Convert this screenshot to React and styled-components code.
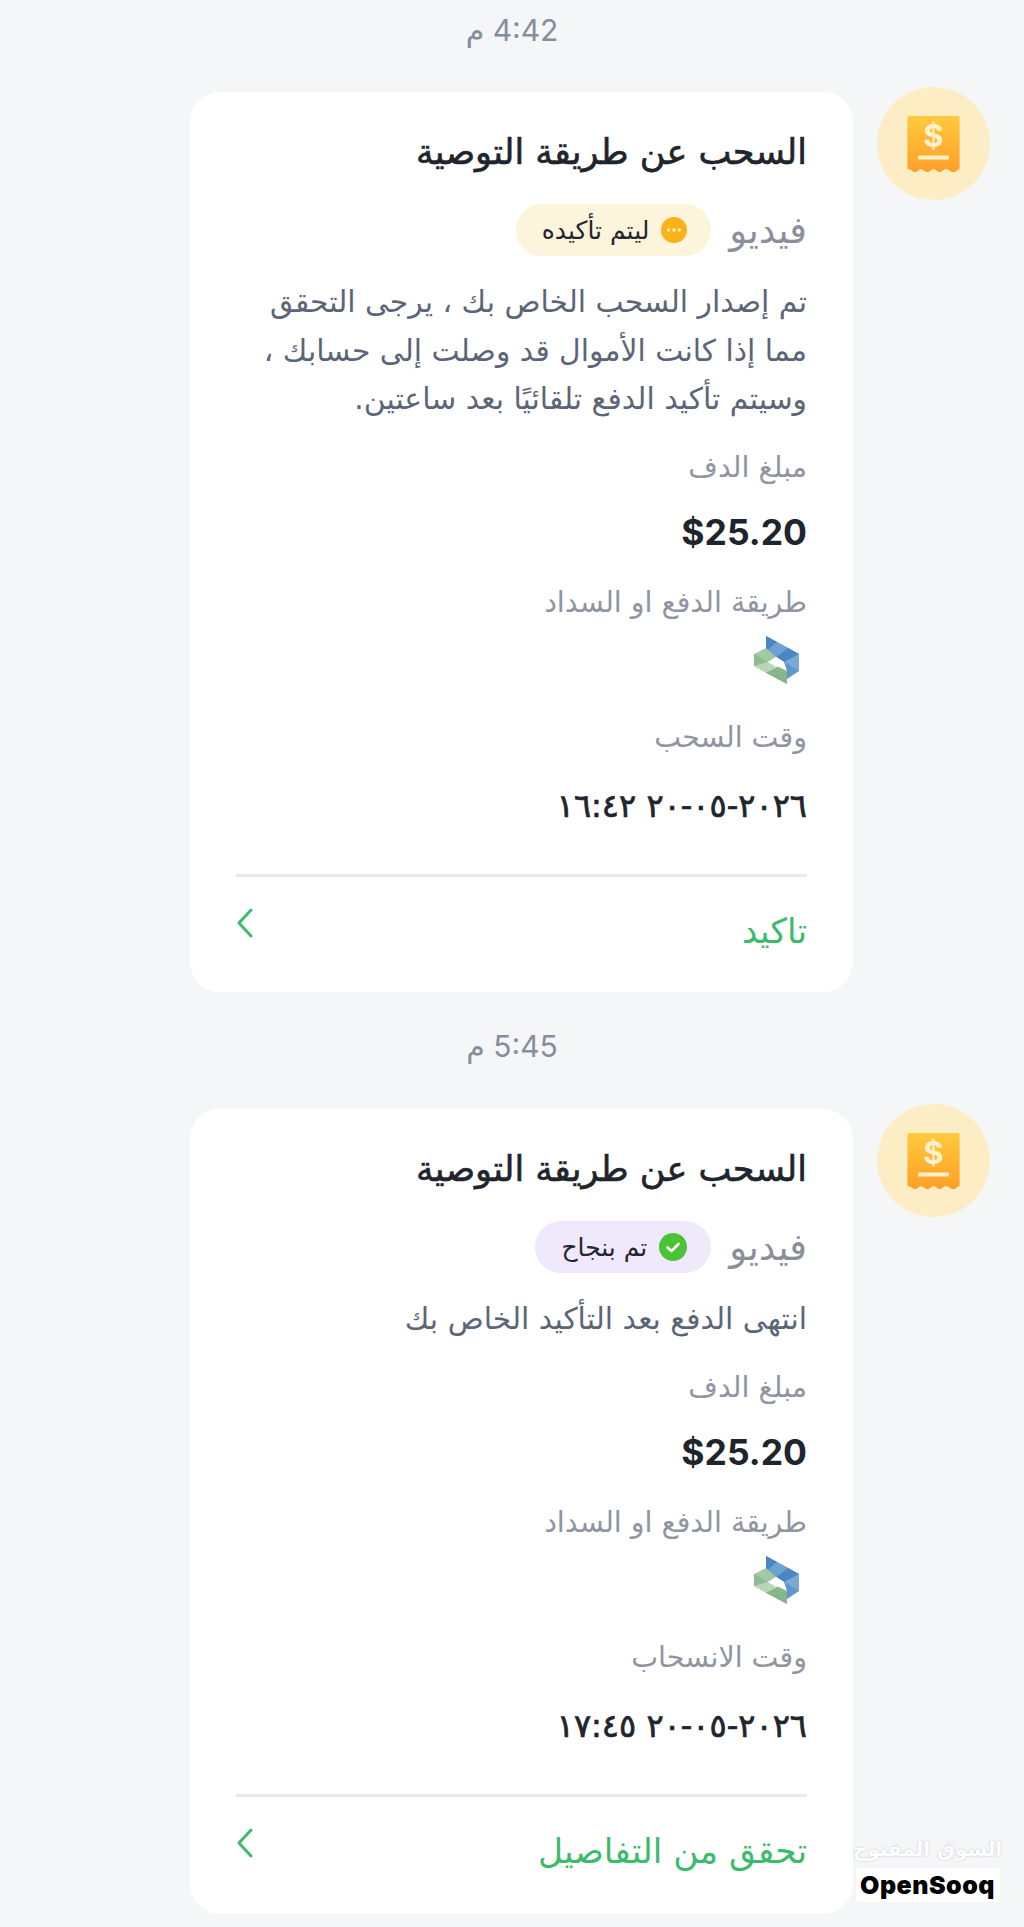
import React from 'react'
import styled, { createGlobalStyle } from 'styled-components'

const GlobalStyle = createGlobalStyle`
  html, body {
    margin: 0;
    padding: 0;
    background-color: #f4f6f8;
  }
  body {
    font-family: "DejaVu Sans", "Noto Sans", sans-serif;
  }
`
const Page = styled.div`
  position: relative;
  width: 1024px;
  height: 1927px;
  overflow: hidden;
  box-sizing: border-box;
  direction: rtl;
  background-color: #f4f6f8;
`
const Stamp = styled.div`
  height: ${props => props.$height}px;
  box-sizing: border-box;
  padding-top: ${props => props.$top}px;
  display: flex;
  align-items: flex-start;
  justify-content: center;
  color: #868e9c;
  font-size: 30px;
  font-family: "Inter", "DejaVu Sans", sans-serif;
`
const Row = styled.div`
  display: flex;
  align-items: flex-start;
  padding-right: 34px;
  gap: 24px;
`
const Avatar = styled.div`
  width: 113px;
  height: 113px;
  margin-top: -5px;
  flex-shrink: 0;
  border-radius: 50%;
  background-color: #fdedc4;
  display: flex;
  align-items: center;
  justify-content: center;
`
const Card = styled.div`
  width: 663px;
  height: ${props => props.$height}px;
  box-sizing: border-box;
  padding: 0 46px;
  border-radius: 30px;
  background-color: #fff;
  display: flex;
  flex-direction: column;
`
const Title = styled.div`
  margin-top: 35px;
  height: 50px;
  line-height: 50px;
  font-size: 35px;
  color: #20242c;
  -webkit-text-stroke: 0.6px #20242c;
`
const TypeRow = styled.div`
  margin-top: 27px;
  display: flex;
  align-items: center;
  gap: 18px;
  height: 52px;
`
const TypeName = styled.span`
  font-size: 37px;
  color: #8b8f9b;
`
const Badge = styled.div`
  height: 52px;
  padding: 0 24px 0 26px;
  border-radius: 26px;
  background-color: ${props => props.$bg};
  display: flex;
  align-items: center;
  gap: 12px;
  font-size: 25px;
  color: #24262e;
`
const Message = styled.p`
  margin: 22px 0 0;
  padding-left: 20px;
  font-size: 29.8px;
  line-height: 48.5px;
  color: #5c6577;
`
const Label = styled.div`
  margin-top: ${props => props.$top}px;
  height: 40px;
  line-height: 40px;
  font-size: 28.5px;
  color: #8f95a1;
`
const Amount = styled.div`
  margin-top: 22px;
  height: 46px;
  line-height: 46px;
  font-family: "Inter", sans-serif;
  font-size: 35.5px;
  font-weight: 700;
  color: #20242c;
  text-align: right;
  direction: ltr;
`
const LogoWrap = styled.div`
  margin-top: 12px;
  height: 52px;
  padding-right: 7px;
  display: flex;
  justify-content: flex-start;
`
const DateText = styled.div`
  margin-top: 25px;
  height: 46px;
  line-height: 46px;
  font-size: 32px;
  color: #20242c;
  -webkit-text-stroke: 0.7px #20242c;
`
const Divider = styled.div`
  margin-top: 45px;
  height: 3px;
  background-color: #e8e9ec;
`
const Footer = styled.div`
  flex: 1;
  display: flex;
  justify-content: space-between;
  align-items: flex-start;
  padding-top: 24px;
  color: #3dbb6c;
`
const FooterText = styled.span`
  font-size: 34.5px;
  line-height: 60px;
`
const Chevron = styled.svg`
  width: 18px;
  height: 32px;
  margin-top: 6px;
`
const Watermark = styled.div`
  position: absolute;
  left: 854px;
  top: 1830px;
  width: 147px;
  display: flex;
  flex-direction: column;
  align-items: center;
`
const WatermarkArabic = styled.div`
  font-size: 20px;
  line-height: 38px;
  font-weight: 700;
  color: #fff;
  text-shadow: 0 0 2px #b9bdc4;
  white-space: nowrap;
`
const WatermarkLogo = styled.div`
  width: 144px;
  height: 34px;
  border-radius: 3px;
  background-color: #fff;
  direction: ltr;
  display: flex;
  align-items: center;
  justify-content: center;
  font-family: "Inter", sans-serif;
  font-weight: 900;
  font-size: 25px;
  letter-spacing: 0.5px;
  color: #000;
`

const ReceiptIcon = ({ id }) => (
  <svg width="55" height="58" viewBox="0 0 56 60">
    <defs>
      <linearGradient id={id} x1="0" y1="0" x2="0" y2="1">
        <stop offset="0" stopColor="#ffca3d" />
        <stop offset="1" stopColor="#ff9f28" />
      </linearGradient>
    </defs>
    <path
      d="M3 1H53a2 2 0 0 1 2 2V56c-3 0-3 3-6.500 3S45 56 41 56s-4 3-6.500 3S31 56 28 56s-3.500 3-6.500 3S18 56 15 56s-3 3-6 3-3-3-8-3V3a2 2 0 0 1 2-2z"
      fill={`url(#${id})`}
    />
    <rect x="12" y="42" width="32" height="4" rx="1" fill="#fff1cc" />
    <text x="28" y="33" textAnchor="middle" fontSize="32" fontWeight="700" fontFamily="Inter, sans-serif" fill="#fff1cc">$</text>
  </svg>
)

const PaymentLogo = () => (
  <svg width="46" height="52" viewBox="0 0 46 52">
    <path d="M12 1L45 19V36L33 44V36L30 27L22 22L12 16Z" fill="#5f96cc" />
    <path d="M12 1L23 7L12 16Z" fill="#4a86c4" />
    <path d="M23 7L34 13L23 22L12 16Z" fill="#6ea2d3" />
    <path d="M34 13L45 19L30 27L23 22Z" fill="#4a86c4" />
    <path d="M45 19V36L30 27Z" fill="#7aa9d2" />
    <path d="M0 19L12 13L22 22L14 27L33 36V49L0 31Z" fill="#a3c9a3" />
    <path d="M0 19L14 27L0 31Z" fill="#8dba8f" />
    <path d="M14 27L24 32L12 38L0 31Z" fill="#b9d6b7" />
    <path d="M24 32L33 36V49L12 38Z" fill="#86b58a" />
    <path d="M22 22L30 27L22 32L14 27Z" fill="#fff" />
  </svg>
)

const PendingIcon = () => (
  <svg width="26" height="26" viewBox="0 0 24 24">
    <circle cx="12" cy="12" r="12" fill="#fbb117" />
    <circle cx="7" cy="12" r="1.600" fill="#fff3d0" />
    <circle cx="12" cy="12" r="1.600" fill="#fff3d0" />
    <circle cx="17" cy="12" r="1.600" fill="#fff3d0" />
  </svg>
)

const DoneIcon = () => (
  <svg width="28" height="28" viewBox="0 0 28 28">
    <circle cx="14" cy="14" r="14" fill="#4ac436" />
    <path d="M8.500 14.500L12.500 18L19.500 11" fill="none" stroke="#fff" strokeWidth="2.600" strokeLinecap="round" strokeLinejoin="round" />
  </svg>
)

const withdrawals = [
  {
    time: '4:42 م',
    stampHeight: 92,
    stampTop: 12,
    height: 900,
    status: 'ليتم تأكيده',
    badgeBg: '#fdf4dc',
    icon: <PendingIcon />,
    message: 'تم إصدار السحب الخاص بك ، يرجى التحقق مما إذا كانت الأموال قد وصلت إلى حسابك ، وسيتم تأكيد الدفع تلقائيًا بعد ساعتين.',
    timeLabel: 'وقت السحب',
    date: '٢٠٢٦-٠٥-٢٠ ١٦:٤٢',
    action: 'تاكيد',
  },
  {
    time: '5:45 م',
    stampHeight: 117,
    stampTop: 36,
    height: 805,
    status: 'تم بنجاح',
    badgeBg: '#efe9fb',
    icon: <DoneIcon />,
    message: 'انتهى الدفع بعد التأكيد الخاص بك',
    timeLabel: 'وقت الانسحاب',
    date: '٢٠٢٦-٠٥-٢٠ ١٧:٤٥',
    action: 'تحقق من التفاصيل',
  },
]

export default function App() {
  return (
    <Page>
      <GlobalStyle />
      {withdrawals.map((item, index) => (
        <React.Fragment key={item.time}>
          <Stamp $height={item.stampHeight} $top={item.stampTop}>{item.time}</Stamp>
          <Row>
            <Avatar><ReceiptIcon id={`receipt-${index}`} /></Avatar>
            <Card $height={item.height}>
              <Title>السحب عن طريقة التوصية</Title>
              <TypeRow>
                <TypeName>فيديو</TypeName>
                <Badge $bg={item.badgeBg}>
                  {item.icon}
                  <span>{item.status}</span>
                </Badge>
              </TypeRow>
              <Message>{item.message}</Message>
              <Label $top={24}>مبلغ الدف</Label>
              <Amount>$25.20</Amount>
              <Label $top={27}>طريقة الدفع او السداد</Label>
              <LogoWrap><PaymentLogo /></LogoWrap>
              <Label $top={31}>{item.timeLabel}</Label>
              <DateText>{item.date}</DateText>
              <Divider />
              <Footer>
                <FooterText>{item.action}</FooterText>
                <Chevron viewBox="0 0 18 32">
                  <path d="M15 3L3 16L15 29" fill="none" stroke="#3dbb6c" strokeWidth="3" strokeLinecap="round" strokeLinejoin="round" />
                </Chevron>
              </Footer>
            </Card>
          </Row>
        </React.Fragment>
      ))}
      <Watermark>
        <WatermarkArabic>السوق المفتوح</WatermarkArabic>
        <WatermarkLogo>OpenSooq</WatermarkLogo>
      </Watermark>
    </Page>
  )
}
